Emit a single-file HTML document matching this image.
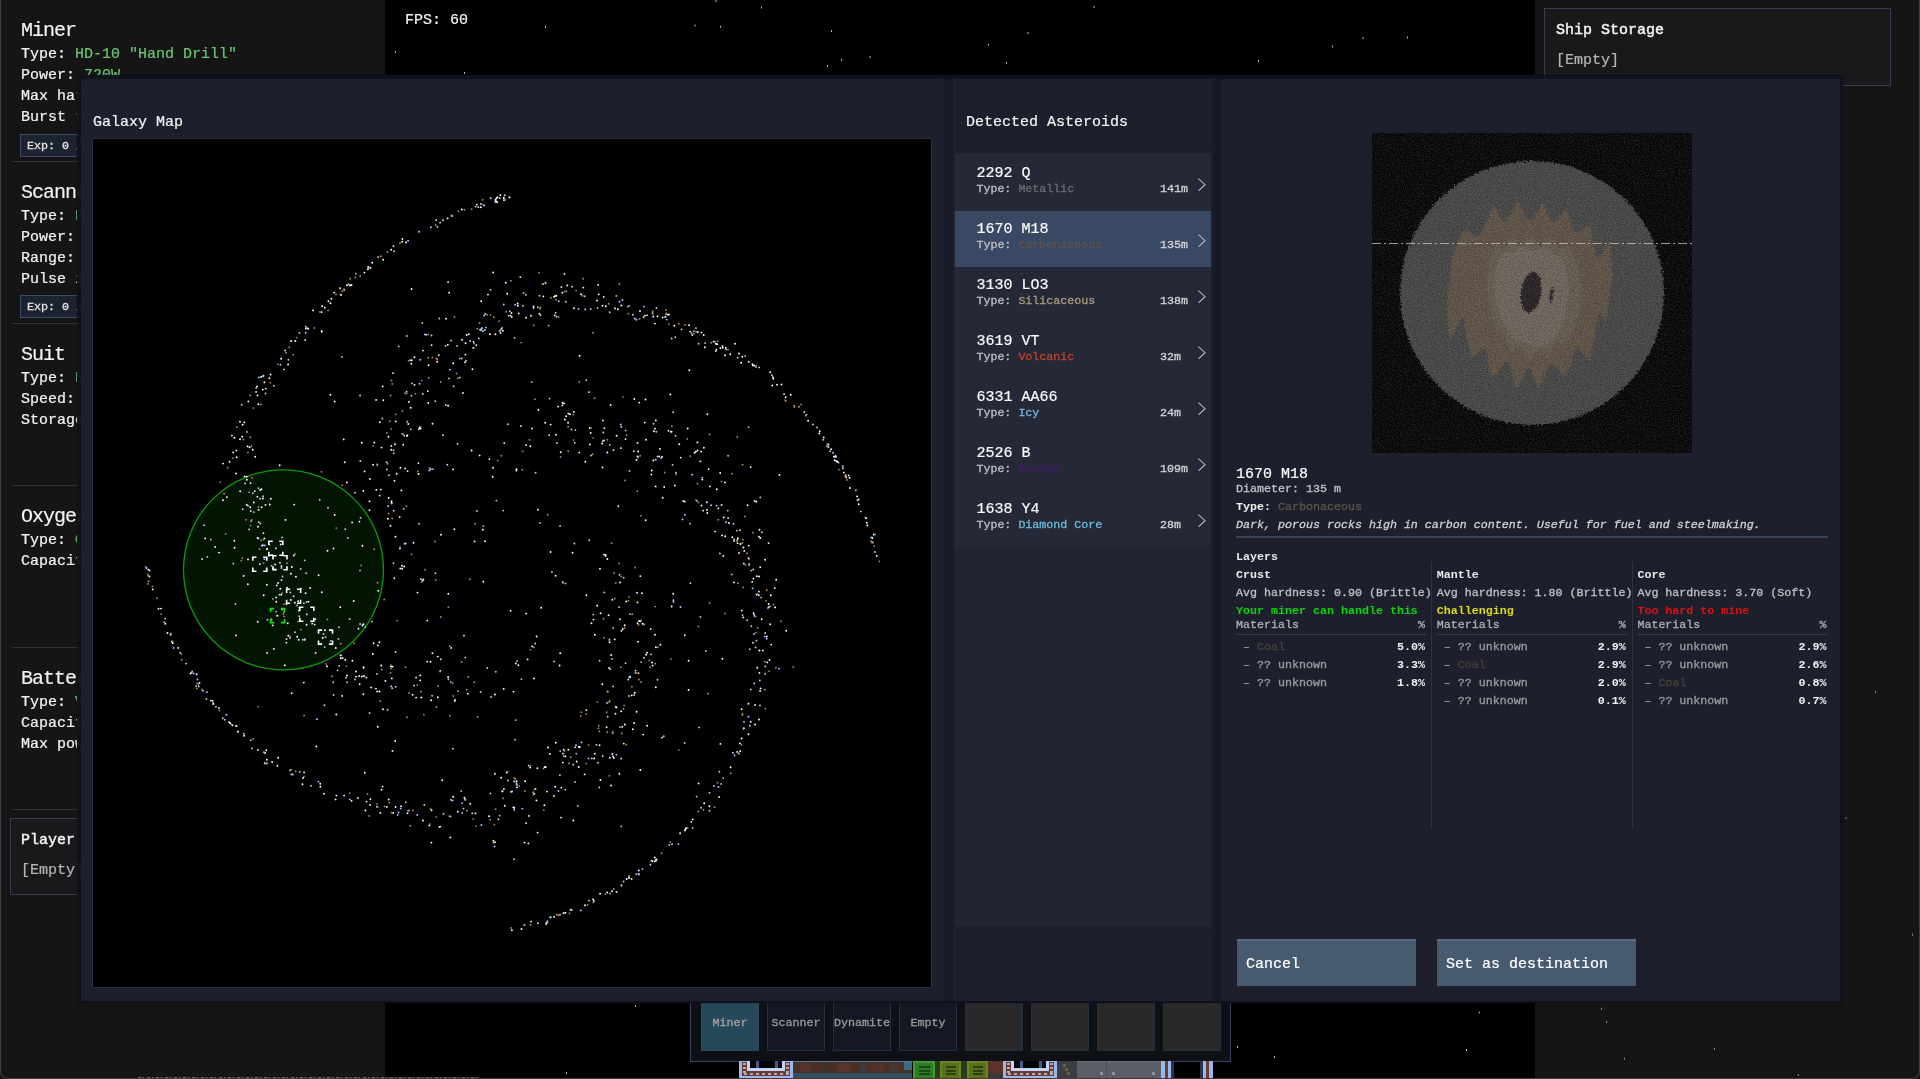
<!DOCTYPE html>
<html lang="en">
<head>
<meta charset="utf-8">
<title>Galaxy Map</title>
<style>
*{box-sizing:border-box;margin:0;padding:0}
html,body{width:1920px;height:1079px;overflow:hidden;background:#000}
body{position:relative;font-family:"Liberation Mono","DejaVu Sans Mono",monospace;font-size:15px;color:#f2f2f2;line-height:1;-webkit-font-smoothing:antialiased}
.abs{position:absolute}
.t{position:absolute;white-space:pre;line-height:1}
.f18{font-size:20px;letter-spacing:-1px;-webkit-text-stroke:.15px}
.f15{font-size:15px;-webkit-text-stroke:.22px}
.f12{font-size:11.67px;-webkit-text-stroke:.3px}
.b{font-weight:bold;-webkit-text-stroke:0}
.g{color:#6cc672}
.side{position:absolute;top:0;height:1079px;background:#151515}
.sep{position:absolute;left:12px;width:70px;height:1px;background:#333336}
.exp{position:absolute;left:20px;width:70px;height:23px;border:1px solid #3b4a66;background:#1d2230}
.box{position:absolute;border:1px solid #3a3a4c;background:#19191c}
#dlgband{position:absolute;left:76.8px;top:75.3px;width:1766.4px;height:927.6px;background:rgba(15,18,29,.96);box-shadow:0 0 1px rgba(15,18,29,.9)}
#dlg{position:absolute;left:81px;top:79px;width:1759px;height:922px;background:#1d202c}
.strip{position:absolute;top:0;height:922px;width:13px;background:linear-gradient(to right,#1d202c 0,#171a25 4px,#171a25 11px,#20232f 11.5px,#1d202c 13px)}
.item{position:absolute;left:0;width:256px;height:56px}
.chev{position:absolute;left:243px;top:24px}
.col{position:absolute;top:0;width:200px}
.slot{position:absolute;top:992.75px;width:58.5px;height:58.5px;border:1px solid #22303f;background:#141822;font-size:11.67px;-webkit-text-stroke:.3px;color:#9c9c9c;text-align:center;padding-top:24.25px;line-height:1}
.slot.e{background:#29292c}
.btn{position:absolute;top:939px;height:47px;background:#475a70;border-top:2px solid #566b84;font-size:15px;-webkit-text-stroke:.22px;line-height:1;padding:16px 0 0 9px;color:#fff;white-space:pre}
.row{position:absolute;left:7px;right:1px;height:18px;font-size:11.67px;-webkit-text-stroke:.3px;color:#9a9a9a;white-space:pre}
.row b{position:absolute;right:0;top:0;color:#f0f0f0}
.coal{color:#4a403c}
</style>
</head>
<body>
<div id="root" style="position:absolute;left:0;top:0;width:1920px;height:1079px;will-change:transform">

<!-- left side panel -->
<div class="side" style="left:0;width:385px">
<div class="t f18 " style="left:21px;top:21.00px;color:#f4f4f4">Miner</div>
<div class="t f15 " style="left:21px;top:47.00px;">Type: <span class="g">HD-10 &quot;Hand Drill&quot;</span></div>
<div class="t f15 " style="left:21px;top:68.00px;">Power: <span class="g">720W</span></div>
<div class="t f15 " style="left:21px;top:89.00px;">Max hardness: <span class="g">2.5</span></div>
<div class="t f15 " style="left:21px;top:110.00px;">Burst radius: <span class="g">1</span></div>
<div class="exp" style="top:134px"></div>
<div class="t f12 " style="left:27px;top:141.00px;color:#e4e4e4">Exp: 0 / 100</div>
<div class="sep" style="top:161px"></div>
<div class="t f18 " style="left:21px;top:183.00px;color:#f4f4f4">Scanner</div>
<div class="t f15 " style="left:21px;top:209.00px;">Type: <span class="g">RS-1 &quot;Pinger&quot;</span></div>
<div class="t f15 " style="left:21px;top:230.00px;">Power: <span class="g">150W</span></div>
<div class="t f15 " style="left:21px;top:251.00px;">Range: <span class="g">100m</span></div>
<div class="t f15 " style="left:21px;top:272.00px;">Pulse interval: <span class="g">5s</span></div>
<div class="exp" style="top:295px"></div>
<div class="t f12 " style="left:27px;top:302.00px;color:#e4e4e4">Exp: 0 / 100</div>
<div class="sep" style="top:323px"></div>
<div class="t f18 " style="left:21px;top:345.00px;color:#f4f4f4">Suit</div>
<div class="t f15 " style="left:21px;top:371.00px;">Type: <span class="g">EVA Mk1 &quot;Tin Can&quot;</span></div>
<div class="t f15 " style="left:21px;top:392.00px;">Speed: <span class="g">12m/s</span></div>
<div class="t f15 " style="left:21px;top:413.00px;">Storage: <span class="g">50kg</span></div>
<div class="sep" style="top:485px"></div>
<div class="t f18 " style="left:21px;top:507.00px;color:#f4f4f4">Oxygen</div>
<div class="t f15 " style="left:21px;top:533.00px;">Type: <span class="g">O2 Tank S</span></div>
<div class="t f15 " style="left:21px;top:554.00px;">Capacity: <span class="g">300s</span></div>
<div class="sep" style="top:647px"></div>
<div class="t f18 " style="left:21px;top:669.00px;color:#f4f4f4">Battery</div>
<div class="t f15 " style="left:21px;top:695.00px;">Type: <span class="g">Volta 1kWh</span></div>
<div class="t f15 " style="left:21px;top:716.00px;">Capacity: <span class="g">1000Wh</span></div>
<div class="t f15 " style="left:21px;top:737.00px;">Max power: <span class="g">1000W</span></div>
<div class="sep" style="top:809px"></div>
<div class="box" style="left:10px;top:818px;width:346px;height:77px"></div>
<div class="t f15 " style="left:21px;top:833.00px;color:#f4f4f4;-webkit-text-stroke:.45px">Player Storage</div>
<div class="t f15 " style="left:21px;top:863.00px;color:#b4b4b4">[Empty]</div>
</div>
<!-- right side panel -->
<div class="side" style="left:1535px;width:385px">
  <div class="box" style="left:9px;top:8px;width:347px;height:78px"></div>
<div class="t f15 " style="left:21px;top:23.00px;color:#f4f4f4;-webkit-text-stroke:.45px">Ship Storage</div><div class="t f15 " style="left:21px;top:53.00px;color:#b4b4b4">[Empty]</div>
</div>
<div class="t f15 " style="left:405px;top:13.00px;">FPS: 60</div>
<!-- game background stars -->
<svg class="abs" style="left:0;top:0" width="1920" height="1079" viewBox="0 0 1920 1079"><path fill="#b8b8b8" d="M395.0 51.0h1v2h-1zM464.0 72.0h1v2h-1zM545.0 26.0h1v2h-1zM694.6 24.5h1v2h-1zM720.0 25.7h1v2h-1zM715.5 0.0h1v2h-1zM761.0 6.6h1v2h-1zM831.0 30.0h1v2h-1zM827.0 65.0h1v2h-1zM841.0 58.7h1v2h-1zM869.5 56.0h1v2h-1zM988.0 43.7h1v2h-1zM1006.0 62.0h1v2h-1zM1027.6 32.0h1v2h-1zM1093.5 6.0h1v2h-1zM1258.0 60.0h1v2h-1zM1332.0 45.5h1v2h-1zM1362.5 37.0h1v2h-1zM1407.0 36.5h1v2h-1zM1237.0 1046.0h1v2h-1zM1478.8 1011.4h1v2h-1zM1466.0 1049.0h1v2h-1zM635.0 1005.0h1v2h-1zM566.0 1072.0h1v2h-1zM1274.0 1056.0h1v2h-1z"/><path fill="#8c8c8c" d="M1601.0 1007.8h1v2h-1zM1606.0 1021.0h1v2h-1zM1714.0 1048.0h1v2h-1zM1624.0 1057.7h1v2h-1zM1912.0 933.8h1v2h-1zM1845.6 817.0h1v2h-1zM1797.8 1074.0h1v2h-1zM1875.0 691.0h1v2h-1z"/></svg>

<!-- hotbar -->
<div class="abs" style="left:690px;top:982px;width:541px;height:80px;border:1px solid #33435c;background:#0e1016"></div>
<div class="slot" style="left:700.75px;background:#25495a;border-color:#264c5d;color:#a8a29c">Miner</div>
<div class="slot" style="left:766.75px">Scanner</div>
<div class="slot" style="left:832.75px">Dynamite</div>
<div class="slot" style="left:898.75px">Empty</div>
<div class="slot e" style="left:964.75px"></div>
<div class="slot e" style="left:1030.75px"></div>
<div class="slot e" style="left:1096.75px"></div>
<div class="slot e" style="left:1162.75px"></div>
<svg class="abs" style="left:738px;top:1061px" width="478" height="18" viewBox="0 0 478 18" shape-rendering="crispEdges"><rect x="1" y="0" width="54" height="18" fill="#9ab8ee"/><rect x="4" y="1" width="48" height="14" fill="#6a3c30"/><rect x="6" y="12" width="3" height="2" fill="#b4a6b4"/><rect x="12" y="12" width="3" height="2" fill="#b4a6b4"/><rect x="18" y="12" width="3" height="2" fill="#b4a6b4"/><rect x="24" y="12" width="3" height="2" fill="#b4a6b4"/><rect x="30" y="12" width="3" height="2" fill="#b4a6b4"/><rect x="36" y="12" width="3" height="2" fill="#b4a6b4"/><rect x="42" y="12" width="3" height="2" fill="#b4a6b4"/><rect x="48" y="12" width="3" height="2" fill="#b4a6b4"/><rect x="5" y="2" width="3" height="2" fill="#b4a6b4"/><rect x="48" y="2" width="3" height="2" fill="#b4a6b4"/><rect x="5" y="6" width="3" height="2" fill="#b4a6b4"/><rect x="48" y="6" width="3" height="2" fill="#b4a6b4"/><rect x="5" y="10" width="3" height="2" fill="#b4a6b4"/><rect x="48" y="10" width="3" height="2" fill="#b4a6b4"/><rect x="9" y="0" width="38" height="10" fill="#c4d4f6"/><rect x="12" y="0" width="32" height="7" fill="#030408"/><rect x="18" y="0" width="3" height="7" fill="#4a5a86"/><rect x="37" y="0" width="3" height="7" fill="#4a5a86"/><rect x="55" y="0" width="119" height="1" fill="#5a7a9c"/><rect x="55" y="1" width="119" height="11" fill="#4a2f27"/><rect x="55" y="12" width="119" height="6" fill="#32505f"/><rect x="62" y="2" width="10" height="9" fill="#553429"/><rect x="84" y="2" width="8" height="9" fill="#40302c"/><rect x="100" y="2" width="12" height="9" fill="#56362a"/><rect x="122" y="2" width="6" height="9" fill="#3c3a40"/><rect x="134" y="2" width="12" height="9" fill="#52332a"/><rect x="152" y="2" width="8" height="9" fill="#44383a"/><rect x="166" y="1" width="8" height="8" fill="#3f6a86"/><rect x="175" y="0" width="22" height="18" fill="#3f9c34"/><rect x="177" y="2" width="18" height="15" fill="#2f7a26"/><rect x="181" y="5" width="11" height="2" fill="#184814"/><rect x="181" y="9" width="11" height="2" fill="#184814"/><rect x="181" y="12" width="11" height="2" fill="#184814"/><rect x="197" y="0" width="5" height="18" fill="#2a3a1c"/><rect x="202" y="0" width="21" height="18" fill="#6c8424"/><rect x="204" y="2" width="17" height="15" fill="#56701c"/><rect x="208" y="5" width="10" height="2" fill="#2e3e0e"/><rect x="208" y="9" width="10" height="2" fill="#2e3e0e"/><rect x="208" y="12" width="10" height="2" fill="#2e3e0e"/><rect x="223" y="0" width="6" height="18" fill="#2a3a1c"/><rect x="229" y="0" width="21" height="18" fill="#6c8424"/><rect x="231" y="2" width="17" height="15" fill="#56701c"/><rect x="235" y="5" width="10" height="2" fill="#2e3e0e"/><rect x="235" y="9" width="10" height="2" fill="#2e3e0e"/><rect x="235" y="12" width="10" height="2" fill="#2e3e0e"/><rect x="250" y="0" width="15" height="12" fill="#5a3428"/><rect x="250" y="12" width="15" height="6" fill="#3a3836"/><rect x="265" y="0" width="54" height="18" fill="#9ab8ee"/><rect x="268" y="1" width="48" height="14" fill="#6a3c30"/><rect x="270" y="12" width="3" height="2" fill="#b4a6b4"/><rect x="276" y="12" width="3" height="2" fill="#b4a6b4"/><rect x="282" y="12" width="3" height="2" fill="#b4a6b4"/><rect x="288" y="12" width="3" height="2" fill="#b4a6b4"/><rect x="294" y="12" width="3" height="2" fill="#b4a6b4"/><rect x="300" y="12" width="3" height="2" fill="#b4a6b4"/><rect x="306" y="12" width="3" height="2" fill="#b4a6b4"/><rect x="312" y="12" width="3" height="2" fill="#b4a6b4"/><rect x="269" y="2" width="3" height="2" fill="#b4a6b4"/><rect x="312" y="2" width="3" height="2" fill="#b4a6b4"/><rect x="269" y="6" width="3" height="2" fill="#b4a6b4"/><rect x="312" y="6" width="3" height="2" fill="#b4a6b4"/><rect x="269" y="10" width="3" height="2" fill="#b4a6b4"/><rect x="312" y="10" width="3" height="2" fill="#b4a6b4"/><rect x="273" y="0" width="38" height="10" fill="#c4d4f6"/><rect x="276" y="0" width="32" height="7" fill="#030408"/><rect x="282" y="0" width="3" height="7" fill="#4a5a86"/><rect x="301" y="0" width="3" height="7" fill="#4a5a86"/><rect x="319" y="0" width="20" height="18" fill="#3a3d42"/><rect x="325" y="3" width="3" height="3" fill="#6e6224"/><rect x="327" y="7" width="3" height="3" fill="#6e6224"/><rect x="329" y="11" width="3" height="3" fill="#6e6224"/><rect x="339" y="0" width="84" height="18" fill="#5a5f67"/><rect x="339" y="0" width="84" height="1" fill="#6c727a"/><rect x="368" y="0" width="1" height="18" fill="#4a4f57"/><rect x="362" y="11" width="3" height="3" fill="#8a929c"/><rect x="374" y="11" width="3" height="3" fill="#8a929c"/><rect x="414" y="11" width="3" height="3" fill="#8a929c"/><rect x="423" y="0" width="4" height="18" fill="#9ab8ee"/><rect x="427" y="0" width="3" height="18" fill="#6a3c30"/><rect x="430" y="0" width="3" height="18" fill="#9ab8ee"/><rect x="433" y="0" width="3" height="18" fill="#2a3350"/><rect x="462" y="0" width="3" height="18" fill="#2a3350"/><rect x="465" y="0" width="3" height="18" fill="#9ab8ee"/><rect x="468" y="0" width="3" height="18" fill="#6a3c30"/><rect x="471" y="0" width="4" height="18" fill="#9ab8ee"/></svg>

<!-- dialog -->
<div id="dlgband"></div>
<div id="dlg">
  <div class="strip" style="left:861px"></div>
  <div class="strip" style="left:1130px"></div>
</div>
<div class="t f15 " style="left:93px;top:115.00px;">Galaxy Map</div>
<div class="abs" style="left:92px;top:138px;width:840px;height:850px;background:#000;border:1px solid #2a2e40"></div>
<svg class="abs" style="left:93px;top:139px" width="838" height="848" viewBox="0 0 838 848"><circle cx="190.5" cy="430.8" r="100" fill="#021402" stroke="#0c9a0c" stroke-width="1.3"/><g fill="none" stroke-linecap="round" stroke-width="1.9"><path stroke="#ffffff" d="M416.4 58.1h0M411.1 61.2h0M410.8 59.2h0M410.8 58.8h0M406.6 59.1h0M404.4 58.3h0M407.4 56.2h0M402.5 61.0h0M403.1 62.3h0M404.2 63.2h0M403.3 59.4h0M397.7 59.1h0M387.9 68.2h0M388.0 64.9h0M383.9 65.6h0M385.3 68.1h0M368.9 70.5h0M359.1 77.1h0M358.6 76.5h0M354.6 79.4h0M343.2 81.1h0M313.1 103.5h0M309.4 100.0h0M309.2 102.7h0M300.5 107.1h0M298.2 110.7h0M290.1 120.7h0M279.2 123.8h0M275.2 127.9h0M274.9 130.2h0M277.6 128.7h0M275.3 128.3h0M271.4 133.6h0M254.0 146.2h0M256.9 146.4h0M258.5 146.0h0M251.3 150.8h0M247.1 149.3h0M248.1 155.9h0M241.2 153.6h0M238.4 159.7h0M235.4 162.3h0M237.5 164.2h0M231.8 168.8h0M229.3 167.3h0M228.6 173.1h0M220.1 171.4h0M228.8 192.8h0M228.7 191.9h0M215.3 189.8h0M212.9 189.5h0M212.2 201.1h0M202.4 202.0h0M198.1 202.0h0M195.1 225.5h0M188.1 219.8h0M177.6 235.5h0M176.4 239.3h0M168.4 237.6h0M170.5 236.6h0M171.4 243.3h0M169.8 250.6h0M172.7 249.6h0M164.0 247.4h0M164.5 256.4h0M163.1 252.9h0M165.4 265.3h0M155.4 262.4h0M151.3 283.4h0M147.0 282.8h0M149.6 285.7h0M147.0 300.3h0M149.2 297.7h0M138.9 296.6h0M141.4 298.8h0M156.6 308.2h0M154.5 307.4h0M159.8 310.8h0M162.2 317.7h0M143.3 311.6h0M140.2 313.4h0M143.6 318.3h0M136.5 322.7h0M130.1 324.6h0M153.8 337.6h0M151.6 337.4h0M143.1 334.5h0M157.6 344.1h0M168.5 350.1h0M167.2 351.0h0M161.8 352.1h0M147.2 352.3h0M169.9 359.5h0M176.8 365.5h0M133.9 358.1h0M130.0 361.2h0M153.7 365.7h0M157.3 368.3h0M165.7 370.9h0M157.8 372.1h0M165.0 387.7h0M170.4 394.1h0M164.5 399.0h0M187.7 405.5h0M169.0 406.6h0M169.8 406.2h0M174.1 409.6h0M173.9 410.3h0M179.2 416.3h0M200.8 416.5h0M155.0 420.4h0M182.1 425.5h0M188.4 427.1h0M198.8 428.0h0M197.9 434.7h0M188.5 441.1h0M202.9 437.8h0M225.6 436.3h0M185.1 443.9h0M173.9 445.8h0M183.8 446.4h0M187.3 449.7h0M217.2 449.0h0M188.2 455.8h0M212.6 454.3h0M183.2 458.4h0M228.8 453.3h0M183.3 462.7h0M197.8 461.0h0M201.9 463.7h0M193.5 465.3h0M205.9 471.6h0M189.0 470.4h0M164.7 482.8h0M177.8 480.6h0M179.6 486.4h0M178.2 480.5h0M260.7 462.0h0M247.3 468.3h0M194.7 484.3h0M221.7 485.6h0M193.5 500.1h0M195.3 496.8h0M193.3 503.6h0M232.0 491.3h0M205.7 500.8h0M204.2 497.7h0M211.7 500.8h0M229.7 499.0h0M270.5 485.2h0M269.4 486.5h0M265.5 489.8h0M242.8 509.0h0M248.0 516.4h0M234.0 527.2h0M247.7 519.2h0M249.6 518.9h0M210.8 543.6h0M252.3 520.7h0M286.3 503.2h0M259.4 521.7h0M279.8 515.0h0M253.9 536.5h0M263.0 532.5h0M270.6 528.7h0M270.5 528.3h0M263.0 537.6h0M266.2 536.9h0M271.0 537.0h0M268.9 537.5h0M249.1 556.9h0M288.2 526.5h0M266.7 545.3h0M243.3 575.5h0M298.0 527.4h0M299.6 527.6h0M278.1 548.4h0M283.0 549.6h0M284.2 552.5h0M292.4 541.9h0M286.5 552.5h0M290.0 570.2h0M334.2 522.6h0M337.5 522.8h0M323.1 538.6h0M327.2 536.4h0M344.8 517.6h0M319.6 555.7h0M327.2 541.4h0M323.1 558.6h0M328.3 558.5h0M347.3 532.0h0M355.1 538.0h0M344.8 558.3h0M362.1 561.0h0M374.8 554.6h0M402.0 555.5h0M417.6 471.7h0M420.5 552.6h0M422.8 524.5h0M425.4 526.2h0M439.2 507.4h0M433.2 474.6h0M55.3 430.6h0M56.5 431.6h0M56.5 437.5h0M59.7 450.4h0M65.5 469.7h0M68.0 469.6h0M72.3 484.8h0M74.5 494.0h0M77.6 495.8h0M79.8 504.3h0M78.8 502.8h0M85.1 508.9h0M97.5 534.5h0M103.6 535.3h0M106.5 543.9h0M117.9 561.6h0M119.7 562.1h0M120.6 564.9h0M120.1 564.9h0M125.9 568.9h0M137.3 584.3h0M136.1 583.3h0M139.4 586.2h0M143.6 587.1h0M145.0 592.5h0M143.0 586.9h0M151.2 596.7h0M164.9 610.9h0M172.1 614.0h0M173.2 611.3h0M173.9 620.7h0M171.7 624.1h0M179.1 623.0h0M185.2 618.8h0M184.4 626.8h0M211.1 633.4h0M210.1 639.0h0M209.5 645.2h0M227.2 644.7h0M227.3 647.7h0M231.0 654.7h0M242.6 660.4h0M243.4 656.6h0M251.1 656.6h0M258.6 661.9h0M264.9 658.9h0M273.5 662.6h0M277.4 660.3h0M272.4 671.5h0M277.1 665.9h0M287.3 673.9h0M295.7 660.5h0M293.8 667.9h0M300.2 674.0h0M302.6 668.0h0M308.0 667.2h0M314.5 674.3h0M315.3 671.6h0M330.0 681.5h0M338.6 671.2h0M336.3 686.4h0M347.2 687.6h0M346.5 687.9h0M360.2 657.8h0M364.8 672.7h0M372.1 660.8h0M371.4 658.7h0M377.2 664.7h0M396.0 677.2h0M402.0 703.3h0M400.4 701.8h0M408.2 638.7h0M409.6 652.3h0M410.9 649.9h0M413.7 633.5h0M411.7 666.8h0M418.2 652.8h0M420.3 668.4h0M421.3 668.7h0M421.2 642.4h0M423.6 642.2h0M424.1 648.4h0M431.4 703.6h0M433.1 684.1h0M435.9 676.9h0M442.5 649.9h0M441.3 654.8h0M437.2 628.5h0M443.5 661.4h0M444.4 629.2h0M453.9 652.6h0M452.8 628.1h0M451.7 628.0h0M461.0 656.9h0M462.2 647.8h0M455.1 608.5h0M468.0 678.6h0M456.9 615.0h0M468.4 648.6h0M480.4 681.5h0M462.8 603.7h0M469.8 623.6h0M475.3 610.7h0M470.7 610.7h0M469.9 614.6h0M472.4 617.4h0M485.7 628.0h0M483.7 622.5h0M491.6 635.4h0M485.8 607.7h0M486.8 608.2h0M501.1 619.5h0M507.4 641.0h0M501.9 614.7h0M509.7 617.1h0M506.6 606.3h0M493.3 571.1h0M516.9 618.8h0M519.3 615.0h0M520.9 618.9h0M520.0 617.5h0M513.6 588.3h0M530.8 604.6h0M529.3 587.8h0M522.5 574.8h0M531.9 585.5h0M523.5 568.4h0M522.8 567.6h0M539.9 590.2h0M528.1 572.2h0M509.3 545.3h0M514.6 552.5h0M541.1 584.0h0M550.2 595.6h0M543.6 572.7h0M554.1 586.7h0M569.1 598.6h0M516.0 528.9h0M541.7 553.7h0M538.7 556.4h0M535.3 540.6h0M542.5 533.9h0M562.8 548.3h0M545.4 534.1h0M542.6 531.6h0M516.6 503.3h0M521.7 500.4h0M559.7 526.6h0M559.1 523.5h0M553.1 515.7h0M554.1 513.8h0M545.1 502.7h0M562.9 508.2h0M567.4 505.8h0M507.6 474.3h0M531.7 486.3h0M529.8 489.9h0M528.5 491.7h0M527.0 480.3h0M562.0 495.7h0M557.7 490.1h0M549.5 484.7h0M550.0 484.9h0M547.3 482.3h0M546.1 482.0h0M544.6 484.3h0M493.4 456.3h0M591.8 496.3h0M469.7 443.1h0M519.4 460.8h0M533.2 462.4h0M544.5 463.4h0M578.7 467.5h0M544.0 453.8h0M549.0 454.3h0M527.0 443.5h0M547.3 437.1h0M507.0 429.7h0M511.0 415.6h0M512.6 416.0h0M512.6 416.9h0M514.4 420.0h0M457.6 413.0h0M418.9 791.2h0M428.5 790.0h0M438.1 782.6h0M444.9 784.1h0M453.1 785.0h0M457.6 778.3h0M461.1 777.9h0M470.5 774.3h0M472.4 773.8h0M477.6 770.8h0M492.0 766.3h0M500.1 760.4h0M500.9 762.1h0M507.1 754.8h0M519.0 752.2h0M514.1 753.5h0M523.5 752.9h0M528.5 746.5h0M533.6 740.0h0M536.0 739.0h0M538.6 739.9h0M545.5 734.9h0M545.7 731.5h0M559.5 722.1h0M563.6 720.5h0M562.7 721.2h0M561.9 722.2h0M561.8 718.5h0M587.1 694.3h0M592.0 691.4h0M593.1 689.2h0M592.2 690.7h0M599.8 680.4h0M611.2 664.2h0M616.4 667.3h0M626.1 657.9h0M637.6 628.3h0M644.2 612.9h0M647.2 612.2h0M646.9 604.4h0M648.6 599.4h0M655.5 595.2h0M650.9 589.2h0M662.1 585.5h0M657.7 582.8h0M648.6 570.3h0M655.4 564.7h0M662.1 565.9h0M667.6 549.4h0M666.4 533.9h0M664.3 528.8h0M674.3 523.4h0M676.5 521.0h0M666.4 511.5h0M669.8 511.6h0M659.9 503.6h0M678.2 505.6h0M673.8 497.5h0M672.2 494.1h0M650.3 478.4h0M677.2 485.2h0M668.7 480.3h0M660.6 474.1h0M648.8 471.6h0M675.5 468.3h0M675.6 465.0h0M682.1 468.4h0M663.6 455.7h0M665.8 456.3h0M677.8 456.3h0M641.0 443.4h0M681.8 449.1h0M659.2 442.9h0M660.4 439.6h0M683.2 440.8h0M663.8 437.2h0M666.1 437.5h0M667.2 428.2h0M656.2 425.2h0M656.2 425.2h0M650.8 424.6h0M672.1 420.7h0M655.5 419.3h0M630.3 416.9h0M651.3 411.9h0M650.4 408.5h0M655.7 406.6h0M675.6 404.1h0M644.6 404.3h0M647.4 405.0h0M644.3 401.2h0M665.9 397.6h0M644.9 399.2h0M639.3 398.3h0M667.3 399.0h0M666.5 390.7h0M629.1 396.4h0M632.2 397.2h0M647.0 391.1h0M622.1 392.6h0M636.0 384.0h0M635.1 379.1h0M630.8 378.5h0M654.6 366.2h0M663.4 362.7h0M661.6 361.9h0M614.3 374.0h0M613.9 370.9h0M625.4 369.4h0M610.2 371.6h0M608.5 366.5h0M613.9 363.2h0M591.7 362.5h0M590.1 362.1h0M623.8 350.2h0M631.9 343.4h0M616.8 347.4h0M627.2 334.0h0M569.7 358.7h0M609.3 340.6h0M581.8 346.5h0M615.7 330.1h0M571.2 348.0h0M562.6 347.4h0M607.4 322.4h0M608.2 312.6h0M601.6 313.7h0M604.5 311.5h0M602.9 312.6h0M587.7 318.6h0M558.3 335.6h0M569.0 318.0h0M586.3 305.3h0M566.1 317.5h0M560.3 321.5h0M594.7 289.5h0M566.9 309.9h0M578.0 292.7h0M575.5 291.8h0M578.6 292.7h0M544.5 317.4h0M545.2 312.5h0M543.5 321.0h0M540.8 312.1h0M560.8 292.2h0M562.0 289.8h0M544.6 303.9h0M562.8 281.4h0M528.0 309.1h0M551.7 283.6h0M532.5 300.1h0M520.4 311.1h0M514.3 313.5h0M523.6 296.8h0M552.5 260.5h0M546.3 263.6h0M511.1 301.4h0M509.2 304.5h0M492.3 322.7h0M511.4 289.1h0M509.9 281.4h0M517.6 266.0h0M486.3 313.6h0M497.7 293.9h0M496.8 289.0h0M496.1 253.1h0M467.7 313.3h0M477.0 275.3h0M473.2 277.3h0M480.9 272.9h0M475.3 274.6h0M471.9 280.5h0M462.9 295.7h0M471.0 264.4h0M469.4 263.7h0M469.3 266.4h0M465.2 267.6h0M456.2 296.1h0M457.6 285.6h0M437.4 307.2h0M439.1 289.4h0M433.1 306.1h0M423.6 330.3h0M423.3 331.6h0M400.0 328.8h0M783.7 416.9h0M779.8 403.4h0M779.4 399.0h0M780.8 395.5h0M774.3 386.5h0M773.9 383.7h0M773.2 379.2h0M765.7 365.3h0M765.6 360.4h0M764.1 357.4h0M757.0 349.0h0M753.3 338.4h0M756.6 338.9h0M752.5 337.3h0M752.7 336.2h0M755.7 336.5h0M750.8 333.6h0M749.9 329.1h0M744.4 322.7h0M743.4 322.3h0M741.7 321.2h0M742.2 317.9h0M742.9 317.7h0M740.9 317.6h0M738.1 310.2h0M735.4 308.1h0M735.5 305.5h0M730.7 298.4h0M726.4 294.5h0M726.8 292.2h0M715.1 281.8h0M711.3 273.1h0M692.7 258.2h0M691.1 255.1h0M697.7 255.7h0M688.5 245.5h0M684.1 245.8h0M679.3 246.5h0M680.3 239.8h0M679.9 238.1h0M677.2 233.3h0M661.2 226.4h0M659.9 226.5h0M659.4 225.1h0M655.7 222.9h0M648.2 223.7h0M649.3 217.8h0M646.0 214.5h0M637.2 215.3h0M642.0 204.8h0M632.0 216.2h0M632.8 208.9h0M629.4 207.1h0M627.4 209.3h0M623.4 210.6h0M629.8 208.8h0M622.8 212.1h0M624.2 205.3h0M622.9 204.7h0M611.9 208.2h0M610.7 196.0h0M604.8 193.0h0M608.5 193.6h0M599.2 196.1h0M597.1 192.6h0M596.1 186.3h0M581.3 186.7h0M574.9 175.7h0M576.0 175.5h0M572.4 177.8h0M569.6 178.4h0M564.6 177.2h0M562.0 184.6h0M560.3 177.5h0M552.1 176.6h0M550.7 178.1h0M547.0 172.0h0M528.3 166.5h0M524.8 170.2h0M522.0 169.4h0M512.8 167.2h0M509.6 166.7h0M510.7 157.9h0M505.7 155.4h0M504.0 161.5h0M505.2 145.9h0M490.3 148.6h0M488.1 155.3h0M480.9 169.2h0M474.3 146.4h0M469.3 153.8h0M468.4 148.1h0M471.5 135.1h0M461.7 176.4h0M461.1 157.7h0M463.3 156.8h0M461.9 157.1h0M450.3 157.4h0M446.4 174.8h0M450.1 145.1h0M440.6 168.8h0M438.0 176.7h0M433.1 178.8h0M427.3 138.1h0M425.7 174.4h0M424.9 166.8h0M424.7 164.5h0M418.5 173.9h0M417.5 176.6h0M418.8 178.1h0M414.2 154.7h0M412.8 143.7h0M407.6 193.9h0M409.8 191.7h0M402.4 195.3h0M395.0 155.6h0M396.9 195.3h0M388.2 162.3h0M389.9 192.1h0M387.1 190.6h0M380.6 202.9h0M383.3 206.1h0M380.4 208.9h0M375.9 195.2h0M373.7 196.0h0M379.4 230.2h0M372.6 204.2h0M369.0 200.8h0M356.2 153.8h0M372.1 223.2h0M353.1 179.8h0M370.0 253.9h0M360.2 224.3h0M354.8 205.8h0M345.8 216.1h0M344.1 222.8h0M338.6 206.1h0M355.1 266.7h0M330.0 211.6h0M335.6 226.3h0M321.5 218.2h0M334.8 252.1h0M318.3 224.7h0M318.8 221.2h0M335.3 264.0h0M321.5 245.9h0M339.5 284.8h0M300.0 234.1h0M315.8 262.9h0M317.7 268.7h0M325.8 290.1h0M326.8 288.5h0M327.6 289.5h0M289.7 247.4h0M290.3 261.2h0M302.7 282.4h0M313.9 297.1h0M309.5 294.9h0M314.4 296.3h0M310.2 305.7h0M325.4 324.1h0M286.9 283.2h0M295.5 297.8h0M302.0 305.3h0M298.3 306.9h0M325.6 335.0h0M298.2 310.7h0M241.6 262.5h0M288.5 308.6h0M314.6 332.1h0M281.3 303.5h0M307.4 328.8h0M268.8 303.7h0M303.7 334.7h0M280.1 325.8h0M301.5 341.7h0M267.3 322.1h0M308.4 351.4h0M251.7 323.2h0M276.9 339.9h0M287.9 350.6h0M295.7 359.0h0M286.6 356.6h0M298.6 362.2h0M298.5 363.8h0M270.3 351.9h0M276.5 362.4h0M306.7 378.1h0M276.5 371.2h0M294.9 379.8h0M297.5 386.8h0M266.4 382.6h0M302.5 397.8h0M306.9 409.6h0M269.4 406.8h0M311.2 427.5h0M309.0 426.8h0M309.3 429.7h0M307.3 429.5h0M301.3 439.3h0M329.6 441.7h0M330.4 440.4h0M327.9 440.1h0M285.3 451.7h0M324.5 453.6h0M372.4 215.6h0M432.2 642.3h0M614.4 275.3h0M271.6 332.4h0M577.4 255.5h0M525.3 367.3h0M558.7 331.5h0M427.9 287.1h0M667.1 551.9h0M467.2 514.2h0M223.4 607.5h0M172.5 365.9h0M283.1 260.9h0M441.0 539.5h0M686.5 335.9h0M315.3 285.0h0M191.9 526.3h0M174.1 513.9h0M526.4 634.7h0M657.7 328.1h0M302.2 602.0h0M518.1 646.5h0M349.2 641.3h0M289.5 647.6h0M237.4 255.8h0M334.3 481.6h0M451.4 666.3h0M250.7 300.4h0M444.6 693.6h0M605.6 644.4h0M410.7 549.9h0M646.0 413.9h0M253.9 343.4h0M627.4 604.9h0M298.8 539.4h0M498.5 484.3h0M271.8 633.8h0M320.5 403.8h0M401.9 634.7h0M452.2 283.7h0M378.6 311.5h0M553.0 300.7h0M357.3 698.4h0M666.0 580.5h0M547.3 631.0h0M411.2 304.1h0M596.3 231.3h0M629.4 519.7h0M396.4 320.1h0M610.9 308.7h0M350.0 296.1h0M160.8 363.5h0M312.0 329.4h0M486.6 216.8h0M693.2 491.7h0M215.5 462.8h0M288.6 650.8h0M180.4 429.5h0M466.6 526.5h0M122.2 407.9h0M126.1 413.6h0M518.1 516.0h0M270.4 555.3h0M339.4 514.2h0M284.8 587.8h0M338.2 561.2h0M434.6 520.4h0M496.8 305.4h0M186.7 326.2h0M552.7 381.2h0M665.9 452.6h0M500.5 480.6h0M515.6 476.2h0M198.7 554.3h0M445.4 271.0h0M382.5 674.4h0M205.1 462.2h0M338.4 703.6h0M475.1 283.7h0M171.4 399.4h0M509.5 328.4h0M241.7 375.9h0M504.2 466.8h0M284.8 506.4h0M628.6 365.9h0M360.1 330.4h0M318.6 150.0h0M299.5 611.9h0M595.6 551.0h0M541.3 260.0h0M435.4 704.4h0M283.3 350.9h0M406.9 191.6h0M595.6 521.7h0M641.2 401.9h0M355.1 143.1h0M280.6 504.3h0M153.8 340.8h0M400.2 133.5h0M150.7 436.9h0M386.6 316.4h0M501.8 495.7h0M358.2 508.9h0M580.2 454.8h0M604.4 303.4h0M222.7 513.9h0M448.2 468.7h0M390.3 442.8h0M371.0 496.6h0M479.6 413.8h0M462.6 436.8h0M399.7 337.7h0M392.0 402.3h0M348.0 395.7h0M443.6 497.5h0M381.6 402.4h0M389.8 390.7h0M445.0 370.7h0M361.4 390.2h0M355.3 454.7h0M154.9 445.2h0M165.8 383.1h0M207.8 449.7h0M213.6 485.7h0M164.4 357.8h0M170.7 456.3h0M177.9 359.8h0M109.2 420.1h0M141.6 408.7h0M222.3 480.3h0M259.1 383.4h0M194.1 448.8h0M201.2 365.6h0M143.1 496.4h0M192.5 380.9h0M141.3 401.7h0M234.5 411.7h0M240.5 409.5h0M112.2 399.4h0M168.7 368.2h0M180.8 509.9h0M219.2 484.6h0"/><path stroke="#b4caff" d="M416.7 58.6h0M411.8 56.3h0M402.3 63.0h0M390.6 66.1h0M391.1 66.4h0M382.6 67.6h0M350.0 81.4h0M347.1 83.7h0M344.5 87.8h0M337.9 88.3h0M326.0 92.7h0M315.1 101.8h0M301.1 112.2h0M285.1 118.2h0M262.8 134.6h0M255.6 145.2h0M247.5 155.6h0M212.7 193.7h0M214.3 189.2h0M212.8 187.6h0M206.4 193.9h0M192.1 211.5h0M195.4 220.8h0M187.5 225.8h0M191.0 230.4h0M180.8 246.7h0M170.3 237.3h0M165.8 238.4h0M168.0 238.1h0M172.5 254.5h0M163.2 248.9h0M148.7 265.7h0M153.9 292.9h0M152.0 344.4h0M165.4 349.3h0M170.1 357.3h0M167.1 359.8h0M155.0 366.8h0M149.7 370.2h0M160.8 373.1h0M167.4 384.5h0M158.1 382.1h0M156.1 390.4h0M189.1 398.4h0M165.6 399.5h0M171.8 406.4h0M171.4 420.1h0M140.4 424.5h0M178.6 426.9h0M182.8 430.4h0M207.7 430.0h0M189.5 437.5h0M197.4 453.5h0M186.4 455.8h0M213.5 463.0h0M177.7 470.8h0M204.1 466.4h0M183.1 472.6h0M206.2 468.7h0M210.9 464.3h0M174.5 480.7h0M206.3 477.3h0M202.0 493.3h0M197.0 499.0h0M256.8 480.0h0M209.9 500.8h0M211.8 500.2h0M230.5 495.0h0M267.1 485.0h0M272.3 488.1h0M237.7 501.9h0M245.4 499.9h0M231.7 508.1h0M247.5 516.3h0M246.2 526.9h0M244.6 531.4h0M240.2 543.2h0M253.1 538.8h0M254.1 543.3h0M262.0 540.5h0M302.6 513.0h0M273.4 538.8h0M284.0 534.9h0M299.2 549.2h0M298.1 547.2h0M302.7 547.8h0M276.6 574.0h0M294.6 570.7h0M321.1 546.5h0M347.8 520.2h0M339.1 556.8h0M355.4 540.2h0M361.7 562.3h0M387.6 553.0h0M394.3 529.0h0M398.1 558.0h0M402.8 532.7h0M424.1 522.1h0M442.2 504.5h0M53.6 429.0h0M72.2 479.6h0M71.2 483.1h0M80.5 508.9h0M87.1 513.8h0M93.1 524.6h0M98.6 533.8h0M100.6 534.4h0M99.1 532.5h0M103.2 547.1h0M104.6 540.4h0M105.7 547.6h0M109.9 551.8h0M113.9 553.1h0M113.5 559.9h0M123.0 567.9h0M133.4 575.7h0M131.7 580.7h0M129.8 579.2h0M144.7 592.9h0M150.8 594.8h0M157.8 601.3h0M158.8 609.4h0M170.9 613.3h0M173.7 624.5h0M171.8 624.4h0M197.0 631.2h0M198.3 635.4h0M199.8 635.5h0M206.8 632.9h0M218.0 646.8h0M225.5 642.6h0M256.8 660.4h0M283.8 667.8h0M305.6 673.5h0M304.6 675.9h0M312.8 663.2h0M307.7 669.6h0M324.2 675.9h0M331.3 666.0h0M350.5 674.8h0M358.0 660.7h0M359.6 661.6h0M356.6 677.2h0M368.3 652.1h0M370.5 669.6h0M369.2 673.9h0M369.2 664.1h0M379.3 674.3h0M388.4 686.0h0M397.4 654.5h0M401.5 707.5h0M406.7 676.6h0M405.4 680.2h0M409.0 652.4h0M414.9 641.5h0M419.2 652.5h0M421.2 670.8h0M424.0 645.7h0M423.7 645.8h0M423.5 644.3h0M429.3 669.6h0M435.7 626.7h0M465.4 652.0h0M472.2 650.6h0M466.9 636.2h0M470.7 617.1h0M484.7 666.9h0M482.0 642.9h0M480.2 625.7h0M482.1 608.3h0M483.3 614.6h0M483.0 606.3h0M488.5 603.4h0M495.6 619.4h0M498.8 619.5h0M504.9 623.7h0M503.5 605.8h0M523.4 615.6h0M528.1 619.5h0M519.7 594.1h0M514.7 577.8h0M527.0 588.1h0M514.0 564.0h0M522.8 568.0h0M520.1 547.4h0M570.8 597.3h0M535.9 557.0h0M506.6 521.8h0M541.4 555.9h0M537.3 538.2h0M536.2 538.3h0M537.1 537.4h0M518.9 519.9h0M532.6 524.2h0M564.5 540.8h0M516.6 500.5h0M551.0 518.7h0M558.0 515.4h0M520.2 488.9h0M500.2 475.6h0M537.0 475.1h0M526.1 468.3h0M472.5 444.4h0M607.4 477.9h0M580.4 461.3h0M580.5 462.9h0M587.5 468.0h0M530.7 438.7h0M526.5 435.7h0M496.3 401.2h0M481.4 404.5h0M431.4 786.0h0M453.6 783.3h0M454.4 783.5h0M457.3 778.5h0M467.0 775.8h0M478.8 771.1h0M487.8 771.4h0M495.9 761.6h0M517.0 754.6h0M530.6 742.5h0M535.9 738.7h0M543.1 735.1h0M545.9 735.5h0M549.4 730.1h0M557.4 725.8h0M558.4 721.7h0M562.9 722.0h0M576.3 705.9h0M579.0 705.3h0M585.4 705.1h0M599.7 688.9h0M598.3 683.0h0M608.1 668.8h0M616.4 671.8h0M616.5 653.7h0M621.0 647.0h0M625.5 648.0h0M628.2 644.9h0M630.2 639.1h0M626.4 632.8h0M641.5 616.5h0M645.9 614.5h0M639.9 613.8h0M650.6 589.7h0M651.0 582.9h0M656.9 586.8h0M655.4 577.8h0M667.0 566.4h0M657.8 550.4h0M666.8 541.4h0M661.2 544.5h0M672.1 534.9h0M672.3 527.5h0M686.0 529.6h0M656.8 510.3h0M662.6 508.4h0M663.4 501.8h0M661.0 495.0h0M671.8 497.6h0M673.7 499.7h0M658.3 487.2h0M654.2 481.2h0M649.6 476.1h0M661.1 475.8h0M661.4 476.9h0M676.8 467.5h0M668.1 458.6h0M659.6 449.4h0M638.7 435.4h0M658.3 431.6h0M660.2 430.5h0M626.9 414.4h0M641.0 400.4h0M669.0 393.3h0M643.7 391.6h0M640.5 384.8h0M633.1 383.2h0M597.1 384.6h0M667.3 358.4h0M634.8 371.6h0M623.5 366.6h0M591.9 375.9h0M618.1 366.3h0M603.8 361.7h0M609.2 338.6h0M599.2 335.7h0M635.1 316.8h0M562.8 320.7h0M568.1 319.1h0M564.5 317.5h0M582.6 296.7h0M536.5 331.9h0M545.1 318.3h0M563.3 292.8h0M580.1 273.3h0M560.6 284.7h0M532.6 291.4h0M516.8 305.9h0M528.3 288.0h0M509.8 302.2h0M481.7 303.8h0M482.4 291.1h0M478.5 290.5h0M463.9 304.0h0M442.6 333.8h0M456.5 259.6h0M414.8 285.2h0M403.4 361.6h0M781.9 413.0h0M778.2 398.4h0M772.5 378.7h0M767.8 372.4h0M764.4 361.2h0M762.9 351.2h0M749.9 327.1h0M745.6 323.6h0M742.6 316.8h0M740.0 313.8h0M737.1 312.2h0M734.0 307.0h0M730.3 300.7h0M723.9 288.4h0M719.9 285.5h0M713.3 275.8h0M678.9 236.3h0M666.1 228.4h0M662.8 228.1h0M652.2 217.1h0M644.7 218.7h0M633.3 210.6h0M621.6 202.7h0M620.4 202.6h0M612.1 204.1h0M605.7 204.8h0M603.0 189.1h0M600.8 192.1h0M598.6 194.1h0M588.6 190.4h0M582.3 198.2h0M578.7 199.5h0M573.6 180.6h0M573.0 175.1h0M572.3 178.0h0M559.6 174.0h0M563.4 169.0h0M554.1 176.2h0M550.9 167.6h0M543.4 180.8h0M541.7 179.5h0M539.8 175.7h0M536.0 166.9h0M529.4 161.0h0M526.5 162.8h0M523.3 156.9h0M516.8 173.2h0M504.5 168.9h0M497.7 169.9h0M492.2 170.5h0M491.6 157.3h0M485.6 169.9h0M479.2 147.8h0M472.9 162.8h0M463.5 177.8h0M465.8 162.3h0M462.7 173.7h0M455.6 186.6h0M447.5 176.3h0M452.7 144.4h0M452.4 143.7h0M446.5 156.8h0M444.8 168.2h0M440.5 167.2h0M432.8 155.8h0M429.9 166.7h0M430.5 153.9h0M421.6 198.9h0M422.2 165.8h0M416.8 172.2h0M415.7 176.7h0M410.8 165.5h0M409.2 188.9h0M408.2 190.3h0M397.5 150.9h0M392.2 175.0h0M392.8 188.4h0M391.2 176.6h0M391.9 191.0h0M389.1 189.0h0M387.8 191.2h0M388.2 190.2h0M385.8 199.5h0M377.1 202.0h0M373.0 221.8h0M368.9 219.5h0M364.1 206.9h0M366.8 219.6h0M358.1 201.5h0M366.9 238.6h0M352.5 206.9h0M357.0 230.6h0M356.0 239.4h0M338.5 196.5h0M331.7 195.4h0M333.3 195.8h0M327.3 220.7h0M342.3 262.2h0M326.6 244.8h0M317.2 221.2h0M329.8 255.0h0M318.9 244.4h0M318.4 256.7h0M313.7 252.8h0M314.3 282.7h0M317.8 290.4h0M311.3 296.8h0M337.6 330.0h0M339.7 330.1h0M336.4 331.5h0M289.3 279.5h0M300.5 311.3h0M300.7 314.2h0M293.6 323.3h0M293.8 330.4h0M284.2 325.5h0M296.0 336.2h0M298.8 364.6h0M310.7 369.9h0M295.2 367.0h0M262.0 353.7h0M300.7 371.7h0M226.7 360.7h0M312.8 404.5h0M311.4 404.7h0M300.5 424.3h0M342.4 434.2h0M364.9 552.1h0M582.9 333.7h0M249.0 217.9h0M422.7 581.1h0M548.2 523.1h0M352.8 266.0h0M360.7 247.3h0M493.3 241.3h0M528.3 687.4h0M279.0 482.4h0M329.3 184.0h0M231.4 566.2h0M438.7 243.1h0M612.8 512.0h0M511.3 453.4h0M591.6 603.9h0M354.2 325.7h0M213.2 434.3h0M267.6 378.9h0M510.3 293.5h0M364.6 304.8h0M313.8 197.0h0M517.3 530.3h0M461.0 522.4h0M254.8 399.0h0M326.0 384.8h0M421.0 720.2h0M506.3 648.5h0M224.0 580.3h0M252.2 390.3h0M597.4 444.2h0M606.1 588.4h0M372.3 518.4h0M267.1 256.5h0M305.7 207.4h0M142.5 464.9h0M422.1 600.8h0M240.6 556.0h0M655.6 288.1h0M589.5 380.4h0M579.6 325.9h0M359.9 609.8h0M603.6 657.6h0M346.3 179.5h0M527.8 285.5h0M498.1 316.5h0M467.2 612.1h0M428.3 540.1h0M357.8 543.1h0M410.3 371.6h0M458.9 432.9h0M390.4 387.1h0M383.9 372.0h0M446.9 383.9h0M467.1 387.0h0M235.0 368.7h0M175.8 416.9h0M267.0 431.6h0M188.5 429.0h0M245.9 488.2h0M159.8 354.3h0M211.7 421.4h0M114.4 417.9h0M111.2 386.3h0M117.8 400.6h0"/><path stroke="#b08648" d="M412.1 60.7h0M388.5 65.3h0M389.7 60.8h0M378.7 70.1h0M371.5 70.7h0M365.4 72.3h0M358.7 77.0h0M350.1 80.8h0M342.6 86.0h0M307.0 104.0h0M294.6 113.0h0M285.3 118.0h0M287.7 117.3h0M276.8 129.5h0M267.2 137.0h0M262.2 138.5h0M257.1 139.8h0M250.8 150.5h0M249.3 152.2h0M243.0 155.5h0M235.1 171.5h0M226.9 172.9h0M221.4 189.0h0M203.7 198.6h0M196.2 208.3h0M200.2 215.6h0M193.1 213.7h0M184.9 225.1h0M177.3 243.6h0M157.2 256.5h0M168.0 265.4h0M160.4 269.1h0M143.9 288.0h0M157.3 298.2h0M150.5 300.5h0M154.9 313.6h0M158.2 307.3h0M140.0 319.1h0M134.7 328.7h0M159.1 339.0h0M127.3 343.1h0M156.2 353.3h0M131.1 354.8h0M165.4 367.7h0M158.8 380.9h0M153.1 380.8h0M157.5 386.6h0M132.7 394.9h0M170.5 400.7h0M168.1 401.2h0M179.0 402.5h0M176.4 405.8h0M166.5 410.2h0M149.4 419.3h0M170.6 424.1h0M194.1 424.3h0M189.0 454.3h0M179.9 460.0h0M190.9 465.1h0M191.1 473.0h0M191.0 477.4h0M190.4 474.9h0M183.8 476.9h0M178.7 480.6h0M205.3 482.4h0M234.4 480.5h0M207.9 490.6h0M197.2 497.8h0M247.7 504.8h0M261.1 504.2h0M233.2 524.9h0M239.0 537.3h0M271.7 537.7h0M288.8 530.7h0M297.9 526.1h0M298.2 529.5h0M297.6 533.7h0M312.5 528.2h0M287.3 562.3h0M316.3 554.0h0M324.4 545.9h0M328.1 552.5h0M313.9 578.3h0M347.0 532.6h0M330.9 575.8h0M343.5 567.9h0M359.6 544.2h0M360.3 556.9h0M375.3 538.0h0M373.6 550.6h0M381.2 543.3h0M384.5 577.9h0M437.4 510.6h0M441.0 508.3h0M52.5 427.7h0M55.0 435.5h0M55.5 437.0h0M55.6 442.3h0M55.1 444.9h0M59.4 447.4h0M64.1 459.2h0M68.2 475.1h0M78.0 494.4h0M79.5 502.2h0M88.2 515.0h0M88.7 520.8h0M104.4 544.5h0M109.0 550.5h0M103.8 549.4h0M105.6 546.0h0M119.8 563.5h0M126.4 571.5h0M138.3 585.5h0M160.2 599.7h0M174.4 624.4h0M198.3 630.6h0M202.8 632.4h0M211.0 637.6h0M256.6 654.1h0M274.5 655.0h0M276.1 676.9h0M284.8 667.9h0M284.1 665.1h0M291.5 667.5h0M296.2 663.6h0M298.7 673.8h0M316.1 671.6h0M320.0 671.5h0M317.3 686.8h0M337.5 669.9h0M337.0 685.1h0M343.3 678.1h0M357.8 677.7h0M372.8 660.1h0M374.0 671.8h0M383.0 687.1h0M397.1 680.7h0M402.6 670.1h0M401.4 685.6h0M400.2 703.7h0M410.0 659.4h0M414.6 632.7h0M422.5 639.9h0M421.2 639.0h0M426.1 646.9h0M431.9 651.9h0M440.3 655.5h0M440.0 653.3h0M441.5 650.5h0M437.5 626.7h0M450.8 671.1h0M450.5 629.5h0M471.7 611.9h0M476.0 624.2h0M477.8 618.3h0M493.1 624.6h0M495.5 606.1h0M487.8 576.9h0M488.4 573.2h0M516.4 636.8h0M493.2 575.1h0M506.3 592.4h0M505.5 589.4h0M505.8 586.7h0M514.2 593.2h0M519.9 593.0h0M504.4 563.1h0M533.3 605.8h0M513.7 573.2h0M528.8 594.5h0M516.0 563.3h0M516.8 561.8h0M530.5 569.8h0M531.2 566.4h0M540.6 555.9h0M538.9 547.8h0M528.0 528.2h0M548.1 543.0h0M545.9 540.5h0M542.9 533.9h0M516.2 501.2h0M557.0 528.2h0M556.3 521.4h0M510.5 479.8h0M577.9 520.1h0M564.8 508.2h0M531.6 488.8h0M551.3 485.5h0M545.6 485.8h0M548.2 481.1h0M470.1 444.1h0M521.8 459.5h0M535.4 462.0h0M536.2 458.1h0M522.8 443.9h0M528.2 437.5h0M521.0 434.0h0M525.9 424.4h0M518.6 404.2h0M418.0 789.0h0M437.5 785.7h0M454.5 781.7h0M463.6 775.4h0M465.3 776.3h0M476.5 774.4h0M494.6 765.9h0M500.3 763.4h0M512.5 755.1h0M520.7 750.0h0M536.3 736.6h0M535.8 737.4h0M568.6 714.2h0M577.3 703.3h0M594.6 688.9h0M605.4 672.5h0M610.4 670.8h0M621.6 668.3h0M624.5 643.8h0M637.7 634.2h0M648.4 605.8h0M649.4 576.0h0M672.5 569.6h0M672.0 550.8h0M675.9 532.1h0M660.6 503.6h0M663.0 493.6h0M664.8 488.7h0M662.6 477.6h0M674.9 469.2h0M680.4 465.5h0M673.2 461.9h0M664.5 455.0h0M673.8 451.3h0M650.2 448.4h0M645.0 444.2h0M656.4 426.3h0M652.3 425.7h0M656.0 420.2h0M653.9 414.2h0M649.2 404.0h0M644.1 401.9h0M649.9 400.6h0M660.1 393.8h0M651.9 377.5h0M625.3 380.7h0M605.3 363.4h0M602.9 361.1h0M628.5 342.4h0M638.9 334.8h0M604.5 344.8h0M644.3 298.0h0M544.2 352.3h0M571.7 333.5h0M597.3 317.3h0M547.2 316.7h0M578.9 287.3h0M533.6 296.1h0M514.4 300.8h0M499.6 315.3h0M529.9 258.1h0M500.2 299.1h0M498.0 288.9h0M480.6 301.1h0M475.2 312.2h0M480.2 275.6h0M429.2 330.8h0M408.3 316.7h0M404.7 321.6h0M786.3 422.4h0M781.2 407.1h0M779.0 403.8h0M782.1 395.8h0M778.1 402.2h0M753.2 337.2h0M754.0 340.9h0M752.2 336.9h0M745.8 330.6h0M734.5 304.9h0M712.8 276.8h0M706.1 267.6h0M708.2 265.4h0M705.8 267.9h0M701.6 268.0h0M701.1 266.7h0M692.1 261.1h0M693.0 262.1h0M663.3 226.6h0M662.8 227.8h0M635.1 210.6h0M624.5 202.3h0M618.2 203.7h0M601.0 194.8h0M603.1 192.8h0M592.1 185.9h0M585.8 184.8h0M576.0 185.1h0M573.3 174.5h0M573.0 170.9h0M559.6 174.7h0M559.7 172.3h0M546.5 179.9h0M535.4 174.7h0M534.7 167.8h0M515.7 164.8h0M489.5 156.8h0M490.1 139.7h0M483.1 151.6h0M471.9 152.7h0M473.4 152.1h0M465.6 178.0h0M463.2 160.7h0M457.9 158.7h0M447.5 168.4h0M449.4 145.3h0M447.1 169.8h0M440.8 186.4h0M429.8 167.0h0M428.2 203.6h0M413.1 172.8h0M406.2 182.1h0M406.3 192.3h0M400.9 178.3h0M397.5 176.1h0M394.2 175.7h0M384.4 189.7h0M381.1 204.5h0M365.0 239.2h0M344.4 220.3h0M335.2 218.8h0M343.2 219.5h0M339.3 218.4h0M335.7 238.9h0M328.6 241.6h0M315.6 221.7h0M322.3 254.6h0M313.4 254.6h0M312.0 254.2h0M298.5 241.5h0M327.7 287.9h0M299.3 244.9h0M309.4 271.9h0M297.6 256.5h0M302.7 275.4h0M310.0 294.9h0M336.5 329.3h0M298.1 290.1h0M293.9 293.9h0M280.0 307.1h0M294.7 324.7h0M284.5 326.4h0M313.4 367.2h0M295.7 374.6h0M299.2 379.5h0M341.8 402.4h0M307.2 408.2h0M318.6 415.3h0M268.2 426.4h0M332.1 430.7h0M328.7 443.0h0M342.8 440.9h0M380.2 680.1h0M562.2 467.6h0M429.7 312.4h0M614.9 554.8h0M532.0 341.4h0M500.1 193.8h0M284.5 443.7h0M441.9 260.2h0M291.2 460.5h0M249.3 346.2h0M418.0 141.7h0M594.3 299.9h0M682.9 529.0h0M228.5 332.7h0M511.2 498.9h0M542.2 428.5h0M361.5 178.0h0M539.2 475.3h0M649.6 325.7h0M446.0 133.6h0M211.1 576.5h0M486.3 242.9h0M583.3 335.2h0M281.2 410.3h0M649.5 574.6h0M253.4 527.1h0M356.9 576.7h0M501.6 259.2h0M548.0 376.6h0M687.9 482.2h0M165.2 567.6h0M296.8 282.3h0M368.6 523.0h0M467.6 317.9h0M345.2 547.0h0M616.6 463.9h0M304.2 481.6h0M347.7 243.0h0M616.5 295.4h0M514.7 552.7h0M356.7 507.3h0M475.1 287.7h0M386.5 184.0h0M363.6 234.5h0M436.5 300.7h0M202.0 415.0h0M700.3 527.9h0M335.1 195.6h0M526.3 145.0h0M324.8 332.5h0M672.1 522.8h0M585.8 611.1h0M631.8 474.4h0M605.4 487.5h0M562.2 524.8h0M454.7 375.8h0M347.7 478.0h0M355.4 468.3h0M382.0 384.8h0M376.9 440.3h0M243.3 389.1h0M148.3 421.6h0"/></g><path d="M175.8 405.90000000000003V402.3H179.4M186.20000000000002 402.3H189.8V405.90000000000003M189.8 412.7V416.3H186.20000000000002M179.4 416.3H175.8V412.7" fill="none" stroke="#ffffff" stroke-width="1.6"/><rect x="182.0" y="408.5" width="1.6" height="1.6" fill="#dfe8ff"/><path d="M159.8 421.8V418.2H163.4M170.20000000000002 418.2H173.8V421.8M173.8 428.59999999999997V432.2H170.20000000000002M163.4 432.2H159.8V428.59999999999997" fill="none" stroke="#ffffff" stroke-width="1.6"/><rect x="166.0" y="424.4" width="1.6" height="1.6" fill="#dfe8ff"/><path d="M180.0 420.40000000000003V416.8H183.6M190.4 416.8H194.0V420.40000000000003M194.0 427.2V430.8H190.4M183.6 430.8H180.0V427.2" fill="none" stroke="#ffffff" stroke-width="1.6"/><rect x="186.2" y="423.0" width="1.6" height="1.6" fill="#dfe8ff"/><path d="M193.6 453.90000000000003V450.3H197.2M204.0 450.3H207.6V453.90000000000003M207.6 460.7V464.3H204.0M197.2 464.3H193.6V460.7" fill="none" stroke="#ffffff" stroke-width="1.6"/><rect x="199.8" y="456.5" width="1.6" height="1.6" fill="#dfe8ff"/><path d="M206.8 471.90000000000003V468.3H210.4M217.20000000000002 468.3H220.8V471.90000000000003M220.8 478.7V482.3H217.20000000000002M210.4 482.3H206.8V478.7" fill="none" stroke="#ffffff" stroke-width="1.6"/><rect x="213.0" y="474.5" width="1.6" height="1.6" fill="#dfe8ff"/><path d="M225.5 494.70000000000005V491.1H229.1M235.9 491.1H239.5V494.70000000000005M239.5 501.5V505.1H235.9M229.1 505.1H225.5V501.5" fill="none" stroke="#ffffff" stroke-width="1.6"/><rect x="231.7" y="497.3" width="1.6" height="1.6" fill="#dfe8ff"/><path d="M177.6 473.20000000000005V469.6H181.2M188.0 469.6H191.6V473.20000000000005M191.6 480.0V483.6H188.0M181.2 483.6H177.6V480.0" fill="none" stroke="#18e018" stroke-width="1.6"/><rect x="183.8" y="475.8" width="1.6" height="1.6" fill="#dfe8ff"/></svg>

<div class="t f15 " style="left:966px;top:115.00px;">Detected Asteroids</div>
<div class="abs" style="left:955px;top:153px;width:256px;height:773px;background:#212431;box-shadow:0 0 2px #212431"></div>
<div class="abs" style="left:955px;top:154px;width:256px;height:393px;background:#252837"></div>
<div class="t f15 " style="left:976.4px;top:166.00px;color:#fafafa">2292 Q</div>
<div class="t f12 " style="left:976.4px;top:184.00px;color:#c0c0c4;">Type: <span style="color:#6c6c70">Metallic</span></div>
<div class="t f12 " style="left:1160px;top:184.00px;color:#d4d4d8;">141m</div>
<svg class="abs" style="left:1196px;top:176px" width="12" height="18" viewBox="0 0 12 18"><path d="M2.5 2.6L9 8.7L2.5 14.8" fill="none" stroke="#b4b8c8" stroke-width="1.1"/></svg>
<div class="abs" style="left:955px;top:211px;width:256px;height:56px;background:#394963"></div>
<div class="t f15 " style="left:976.4px;top:222.00px;color:#fafafa">1670 M18</div>
<div class="t f12 " style="left:976.4px;top:240.00px;color:#c0c0c4;">Type: <span style="color:#5d544c">Carbonaceous</span></div>
<div class="t f12 " style="left:1160px;top:240.00px;color:#d4d4d8;">135m</div>
<svg class="abs" style="left:1196px;top:232px" width="12" height="18" viewBox="0 0 12 18"><path d="M2.5 2.6L9 8.7L2.5 14.8" fill="none" stroke="#b4b8c8" stroke-width="1.1"/></svg>
<div class="t f15 " style="left:976.4px;top:278.00px;color:#fafafa">3130 LO3</div>
<div class="t f12 " style="left:976.4px;top:296.00px;color:#c0c0c4;">Type: <span style="color:#a99c7c">Silicaceous</span></div>
<div class="t f12 " style="left:1160px;top:296.00px;color:#d4d4d8;">138m</div>
<svg class="abs" style="left:1196px;top:288px" width="12" height="18" viewBox="0 0 12 18"><path d="M2.5 2.6L9 8.7L2.5 14.8" fill="none" stroke="#b4b8c8" stroke-width="1.1"/></svg>
<div class="t f15 " style="left:976.4px;top:334.00px;color:#fafafa">3619 VT</div>
<div class="t f12 " style="left:976.4px;top:352.00px;color:#c0c0c4;">Type: <span style="color:#c0432f">Volcanic</span></div>
<div class="t f12 " style="left:1160px;top:352.00px;color:#d4d4d8;">32m</div>
<svg class="abs" style="left:1196px;top:344px" width="12" height="18" viewBox="0 0 12 18"><path d="M2.5 2.6L9 8.7L2.5 14.8" fill="none" stroke="#b4b8c8" stroke-width="1.1"/></svg>
<div class="t f15 " style="left:976.4px;top:390.00px;color:#fafafa">6331 AA66</div>
<div class="t f12 " style="left:976.4px;top:408.00px;color:#c0c0c4;">Type: <span style="color:#7db4dc">Icy</span></div>
<div class="t f12 " style="left:1160px;top:408.00px;color:#d4d4d8;">24m</div>
<svg class="abs" style="left:1196px;top:400px" width="12" height="18" viewBox="0 0 12 18"><path d="M2.5 2.6L9 8.7L2.5 14.8" fill="none" stroke="#b4b8c8" stroke-width="1.1"/></svg>
<div class="t f15 " style="left:976.4px;top:446.00px;color:#fafafa">2526 B</div>
<div class="t f12 " style="left:976.4px;top:464.00px;color:#c0c0c4;">Type: <span style="color:#47196a">Exotic</span></div>
<div class="t f12 " style="left:1160px;top:464.00px;color:#d4d4d8;">109m</div>
<svg class="abs" style="left:1196px;top:456px" width="12" height="18" viewBox="0 0 12 18"><path d="M2.5 2.6L9 8.7L2.5 14.8" fill="none" stroke="#b4b8c8" stroke-width="1.1"/></svg>
<div class="t f15 " style="left:976.4px;top:502.00px;color:#fafafa">1638 Y4</div>
<div class="t f12 " style="left:976.4px;top:520.00px;color:#c0c0c4;">Type: <span style="color:#6cbcd6">Diamond Core</span></div>
<div class="t f12 " style="left:1160px;top:520.00px;color:#d4d4d8;">28m</div>
<svg class="abs" style="left:1196px;top:512px" width="12" height="18" viewBox="0 0 12 18"><path d="M2.5 2.6L9 8.7L2.5 14.8" fill="none" stroke="#b4b8c8" stroke-width="1.1"/></svg>

<svg class="abs" style="left:1372px;top:133px" width="320" height="320" viewBox="0 0 320 320">
<defs>
<filter id="jag" x="-5%" y="-5%" width="110%" height="110%"><feTurbulence type="fractalNoise" baseFrequency="0.55" numOctaves="1" seed="7" result="n"/><feDisplacementMap in="SourceGraphic" in2="n" scale="7" xChannelSelector="R" yChannelSelector="G"/></filter>
<filter id="grain" x="0" y="0" width="100%" height="100%"><feTurbulence type="fractalNoise" baseFrequency="0.85" numOctaves="2" seed="11" result="n"/><feColorMatrix in="n" type="matrix" values="0 0 0 0 0 0 0 0 0 0 0 0 0 0 0 .55 0 0 0 -0.19"/></filter>
<filter id="grainw" x="0" y="0" width="100%" height="100%"><feTurbulence type="fractalNoise" baseFrequency="0.8" numOctaves="2" seed="29" result="n"/><feColorMatrix in="n" type="matrix" values="0 0 0 0 1 0 0 0 0 1 0 0 0 0 1 0 .3 0 0 -0.12"/></filter>
</defs>
<rect width="320" height="320" fill="#060606"/>
<g filter="url(#jag)">
<circle cx="160" cy="160" r="132" fill="#484848"/>
<polygon points="94.9,94.9 102.3,104.4 108.2,102.3 121.6,72.7 130.5,89.0 134.9,88.4 145.9,66.7 154.8,86.6 160.1,86.6 170.5,69.7 179.4,88.4 183.9,88.4 194.2,75.6 202.3,99.3 206.1,99.3 218.0,90.5 223.9,123.1 228.4,123.1 237.2,106.8 240.8,142.3 237.2,166.1 234.3,189.8 226.9,177.9 222.4,204.6 218.0,228.4 209.1,218.0 204.6,214.1 197.2,234.3 191.3,243.8 182.4,231.3 177.9,230.4 170.5,249.1 166.1,254.2 158.7,235.8 154.2,234.9 148.3,250.6 143.8,255.6 137.0,229.8 133.5,228.9 124.6,240.2 118.6,243.8 112.7,215.0 110.3,214.1 103.8,222.4 99.3,226.0 91.3,185.3 88.4,184.5 81.6,203.1 77.7,206.7 75.6,189.8 75.6,166.1 80.1,124.6 89.0,100.8" fill="#63564a"/>
<polygon points="117.1,127.5 124.6,112.7 132.0,118.6 139.4,103.8 148.3,114.2 158.7,102.3 167.6,114.2 177.9,103.8 186.8,117.1 195.7,112.7 204.6,130.5 209.1,154.2 207.6,177.9 201.7,195.7 194.2,213.5 183.9,207.6 176.5,225.4 166.1,216.5 157.2,228.4 148.3,213.5 139.4,219.5 132.0,201.7 123.1,195.7 117.1,172.0 114.2,148.3" fill="#695e53"/>
<polygon points="126.0,127.5 133.5,116.3 141.8,120.1 148.3,113.3 160.1,118.0 170.5,113.3 180.3,119.2 189.8,126.0 195.1,139.4 196.9,160.1 192.8,183.9 185.3,201.7 175.6,211.2 163.1,215.0 151.8,209.1 140.0,204.6 131.1,189.8 123.7,172.0 120.7,148.3" fill="#726a61"/>
<ellipse cx="159" cy="159.3" rx="10" ry="20.5" transform="rotate(9 159 159.3)" fill="#2c2126"/>
<ellipse cx="179.5" cy="162" rx="1.8" ry="8" transform="rotate(8 179.5 162)" fill="#33262b"/>
</g>
<rect width="320" height="320" filter="url(#grain)"/>
<rect width="320" height="320" filter="url(#grainw)"/>
<path d="M0 110.5H320" stroke="#c8c8c8" stroke-opacity=".75" stroke-width="1" stroke-dasharray="9 3 2 3"/>
</svg>
<div class="t f15 " style="left:1236px;top:467.00px;color:#fafafa">1670 M18</div>
<div class="t f12 " style="left:1236px;top:484.00px;color:#c4c4c8;">Diameter: 135 m</div>
<div class="t f12 b" style="left:1236px;top:502.00px;color:#f0f0f0;">Type: <span style="color:#5d544c;font-weight:normal;-webkit-text-stroke:.3px">Carbonaceous</span></div>
<div class="t f12 " style="left:1236px;top:520.00px;color:#d0d0d4;font-style:italic;">Dark, porous rocks high in carbon content. Useful for fuel and steelmaking.</div>
<div class="abs" style="left:1236px;top:536px;width:592px;height:2px;background:#3a4258"></div>
<div class="t f12 b" style="left:1236px;top:552.00px;color:#e8e8e8;">Layers</div>
<div class="abs" style="left:1431px;top:562px;width:1px;height:266px;background:#2d3242"></div>
<div class="abs" style="left:1632px;top:562px;width:1px;height:266px;background:#2d3242"></div>
<div class="t f12 b" style="left:1236.0px;top:570.00px;color:#eaeaea;">Crust</div>
<div class="t f12 " style="left:1236.0px;top:588.00px;color:#c0c0c4;">Avg hardness: 0.90 (Brittle)</div>
<div class="t f12 b" style="left:1236.0px;top:606.00px;color:#08d808;">Your miner can handle this</div>
<div class="t f12 " style="left:1236.0px;top:620.00px;color:#b0b0b4;">Materials</div>
<div class="t f12" style="left:1411.0px;top:620px;width:14px;text-align:right;color:#b0b0b4">%</div>
<div class="abs" style="left:1236.0px;top:634px;width:190px;height:1px;background:#343a4c"></div>
<div class="t f12 " style="left:1243.0px;top:642.00px;color:#9c9ca0;">– <span class="coal">Coal</span></div>
<div class="t f12" style="left:1376.0px;top:642px;width:49px;text-align:right;color:#f2f2f2;font-weight:bold;-webkit-text-stroke:0">5.0%</div>
<div class="t f12 " style="left:1243.0px;top:660.00px;color:#9c9ca0;">– ?? unknown</div>
<div class="t f12" style="left:1376.0px;top:660px;width:49px;text-align:right;color:#f2f2f2;font-weight:bold;-webkit-text-stroke:0">3.3%</div>
<div class="t f12 " style="left:1243.0px;top:678.00px;color:#9c9ca0;">– ?? unknown</div>
<div class="t f12" style="left:1376.0px;top:678px;width:49px;text-align:right;color:#f2f2f2;font-weight:bold;-webkit-text-stroke:0">1.8%</div>
<div class="t f12 b" style="left:1436.7px;top:570.00px;color:#eaeaea;">Mantle</div>
<div class="t f12 " style="left:1436.7px;top:588.00px;color:#c0c0c4;">Avg hardness: 1.80 (Brittle)</div>
<div class="t f12 b" style="left:1436.7px;top:606.00px;color:#dcdc10;">Challenging</div>
<div class="t f12 " style="left:1436.7px;top:620.00px;color:#b0b0b4;">Materials</div>
<div class="t f12" style="left:1611.7px;top:620px;width:14px;text-align:right;color:#b0b0b4">%</div>
<div class="abs" style="left:1436.7px;top:634px;width:190px;height:1px;background:#343a4c"></div>
<div class="t f12 " style="left:1443.7px;top:642.00px;color:#9c9ca0;">– ?? unknown</div>
<div class="t f12" style="left:1576.7px;top:642px;width:49px;text-align:right;color:#f2f2f2;font-weight:bold;-webkit-text-stroke:0">2.9%</div>
<div class="t f12 " style="left:1443.7px;top:660.00px;color:#9c9ca0;">– <span class="coal">Coal</span></div>
<div class="t f12" style="left:1576.7px;top:660px;width:49px;text-align:right;color:#f2f2f2;font-weight:bold;-webkit-text-stroke:0">2.9%</div>
<div class="t f12 " style="left:1443.7px;top:678.00px;color:#9c9ca0;">– ?? unknown</div>
<div class="t f12" style="left:1576.7px;top:678px;width:49px;text-align:right;color:#f2f2f2;font-weight:bold;-webkit-text-stroke:0">2.0%</div>
<div class="t f12 " style="left:1443.7px;top:696.00px;color:#9c9ca0;">– ?? unknown</div>
<div class="t f12" style="left:1576.7px;top:696px;width:49px;text-align:right;color:#f2f2f2;font-weight:bold;-webkit-text-stroke:0">0.1%</div>
<div class="t f12 b" style="left:1637.4px;top:570.00px;color:#eaeaea;">Core</div>
<div class="t f12 " style="left:1637.4px;top:588.00px;color:#c0c0c4;">Avg hardness: 3.70 (Soft)</div>
<div class="t f12 b" style="left:1637.4px;top:606.00px;color:#e01010;">Too hard to mine</div>
<div class="t f12 " style="left:1637.4px;top:620.00px;color:#b0b0b4;">Materials</div>
<div class="t f12" style="left:1812.4px;top:620px;width:14px;text-align:right;color:#b0b0b4">%</div>
<div class="abs" style="left:1637.4px;top:634px;width:190px;height:1px;background:#343a4c"></div>
<div class="t f12 " style="left:1644.4px;top:642.00px;color:#9c9ca0;">– ?? unknown</div>
<div class="t f12" style="left:1777.4px;top:642px;width:49px;text-align:right;color:#f2f2f2;font-weight:bold;-webkit-text-stroke:0">2.9%</div>
<div class="t f12 " style="left:1644.4px;top:660.00px;color:#9c9ca0;">– ?? unknown</div>
<div class="t f12" style="left:1777.4px;top:660px;width:49px;text-align:right;color:#f2f2f2;font-weight:bold;-webkit-text-stroke:0">2.6%</div>
<div class="t f12 " style="left:1644.4px;top:678.00px;color:#9c9ca0;">– <span class="coal">Coal</span></div>
<div class="t f12" style="left:1777.4px;top:678px;width:49px;text-align:right;color:#f2f2f2;font-weight:bold;-webkit-text-stroke:0">0.8%</div>
<div class="t f12 " style="left:1644.4px;top:696.00px;color:#9c9ca0;">– ?? unknown</div>
<div class="t f12" style="left:1777.4px;top:696px;width:49px;text-align:right;color:#f2f2f2;font-weight:bold;-webkit-text-stroke:0">0.7%</div>
<div class="btn" style="left:1237px;width:179px">Cancel</div>
<div class="btn" style="left:1437px;width:199px">Set as destination</div>

<div class="abs" style="left:1918.5px;top:15px;width:1.5px;height:9px;background:#c4c4c4"></div>
<div class="abs" style="left:138px;top:1077px;width:342px;height:1px;background:repeating-linear-gradient(to right,#6a6a6a 0,#6a6a6a 3px,#2a2a2a 3px,#2a2a2a 5px,#777 5px,#777 6px,#222 6px,#222 9px)"></div>
<div class="abs" style="left:0;top:0;width:1920px;height:1079px;border:1px solid #3c3e3e;border-top:none;border-radius:0 0 8px 8px;pointer-events:none"></div>
</div>
</body>
</html>
